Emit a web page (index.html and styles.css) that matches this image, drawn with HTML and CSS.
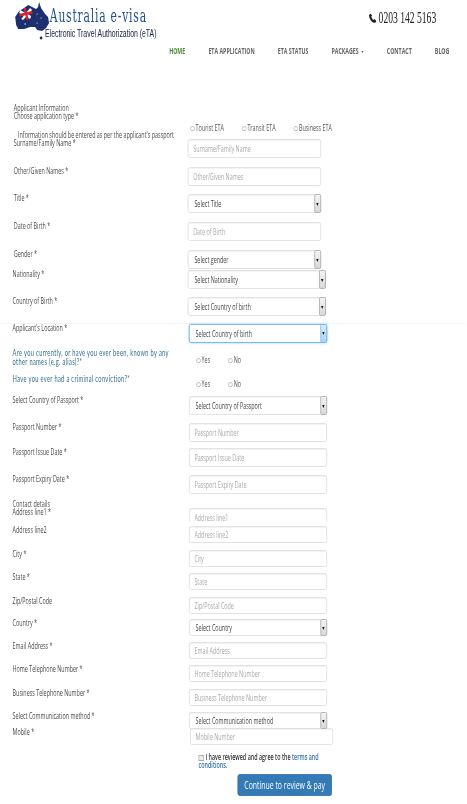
FILE: index.html
```html
<!DOCTYPE html>
<html lang="en">
<head>
<meta charset="utf-8">
<title>Australia e-visa</title>
<link rel="stylesheet" href="styles.css">
</head>
<body>
<div class="frame">
<div class="page">
  <header class="top">
    <a class="brand" href="#">
      <svg class="map" viewBox="0 0 50 42" preserveAspectRatio="none" aria-hidden="true">
        <path fill="#1d2f6f" d="M5 17 9 11 14 8 18 5 22 7 26 9 28 7 29 2 31 8 35 14 38 17 39 23 36 28 32 31 27 30 25 27 20 27 14 29 8 29 6 25Z"/>
        <circle cx="31" cy="38" r="1.4" fill="#1d2f6f"/>
        <path fill="#fff" d="M10 10 21 16 20 19 9 13ZM11 19 20 8 22 10 13 20Z"/>
        <path fill="#d8232f" d="M9 14 22 11 22.6 13.4 9.6 16.6ZM13.5 8 15.5 7.4 18.6 19.6 16.4 20.2Z"/>
        <g fill="#fff"><circle cx="27" cy="14" r=".6"/><circle cx="31" cy="18" r=".6"/><circle cx="27" cy="23" r=".6"/><circle cx="15" cy="24" r=".7"/></g>
      </svg>
      <span class="brand-text">
        <span class="brand-name">Australia e-visa</span>
        <span class="brand-sub">Electronic Travel Authorization (eTA)</span>
      </span>
    </a>
    <div class="phone">
      <svg class="phone-icon" viewBox="0 0 24 24" preserveAspectRatio="none" aria-hidden="true"><path d="M6.6 1.5 3 3.6C1.5 5 1.6 8 3.6 12.500s6 8.700 10.400 10.500c2.500.9 5.500.7 7-.9l2-3-5.500-4.500-3 2c-2.500-1-5.500-5-6.300-8.300l2.600-2.300Z"/></svg>
      <span>0203 142 5163</span>
    </div>
  </header>
  <nav class="nav">
    <a class="nav-link nav-link--active" href="#">Home</a>
    <a class="nav-link" href="#">ETA Application</a>
    <a class="nav-link" href="#">ETA Status</a>
    <a class="nav-link" href="#">Packages <span class="caret"></span></a>
    <a class="nav-link" href="#">Contact</a>
    <a class="nav-link" href="#">Blog</a>
  </nav>

  <form class="form">
    <div class="row row-intro">
      <div class="label">
        Applicant Information<br>Choose application type *
      </div>
      <div class="radios radios--type">
        <label class="radio"><input type="radio" name="type">Tourist ETA</label>
        <label class="radio"><input type="radio" name="type">Transit ETA</label>
        <label class="radio"><input type="radio" name="type">Business ETA</label>
      </div>
    </div>
    <p class="note">Information should be entered as per the applicant's passport</p>
    <div class="row h28">
      <div class="label">Surname/Family Name *</div>
      <input class="field" placeholder="Surname/Family Name">
    </div>
    <div class="row h27">
      <div class="label">Other/Given Names *</div>
      <input class="field" placeholder="Other/Given Names">
    </div>
    <div class="row h28">
      <div class="label">Title *</div>
      <div class="select"><select><option>Select Title</option></select><span class="arrow"></span></div>
    </div>
    <div class="row h28">
      <div class="label">Date of Birth *</div>
      <input class="field" placeholder="Date of Birth">
    </div>
    <div class="row h20">
      <div class="label">Gender *</div>
      <div class="select"><select><option>Select gender</option></select><span class="arrow"></span></div>
    </div>
    <div class="row row-b h27">
      <div class="label">Nationality *</div>
      <div class="select select--wide"><select><option>Select Nationality</option></select><span class="arrow"></span></div>
    </div>
    <div class="row row-b row-ruled">
      <div class="label">Country of Birth *</div>
      <div class="select select--wide"><select><option>Select Country of birth</option></select><span class="arrow"></span></div>
    </div>
    <div class="row row-b row-c row-location">
      <div class="label">Applicant's Location *</div>
      <div class="select select--wide select--focus"><select><option>Select Country of birth</option></select><span class="arrow"></span></div>
    </div>
    <div class="row row-b row-c row-q1">
      <div class="question">Are you currently, or have you ever been, known by any other names (e.g. alias)?*</div>
      <div class="radios radios--yes">
        <label class="radio"><input type="radio" name="alias">Yes</label>
        <label class="radio"><input type="radio" name="alias">No</label>
      </div>
    </div>
    <div class="row row-b row-c h22">
      <div class="question">Have you ever had a criminal conviction?*</div>
      <div class="radios radios--yes radios--low">
        <label class="radio"><input type="radio" name="crime">Yes</label>
        <label class="radio"><input type="radio" name="crime">No</label>
      </div>
    </div>
    <div class="row row-b row-c h27">
      <div class="label">Select Country of Passport *</div>
      <div class="select select--wide"><select><option>Select Country of Passport</option></select><span class="arrow"></span></div>
    </div>
    <div class="row row-b row-c h25">
      <div class="label">Passport Number *</div>
      <input class="field field--wide" placeholder="Passport Number">
    </div>
    <div class="row row-b row-c h27">
      <div class="label">Passport Issue Date *</div>
      <input class="field field--wide" placeholder="Passport Issue Date">
    </div>
    <div class="row row-b row-c h25">
      <div class="label">Passport Expiry Date *</div>
      <input class="field field--wide" placeholder="Passport Expiry Date">
    </div>
    <div class="row row-b row-c row-contact">
      <div class="label">Contact details<br>Address line1 *</div>
      <div class="clip"><input class="field field--wide" placeholder="Address line1"></div>
    </div>
    <div class="row row-b row-c h24">
      <div class="label">Address line2</div>
      <input class="field field--wide field--short" placeholder="Address line2">
    </div>
    <div class="row row-b row-c h23">
      <div class="label">City *</div>
      <input class="field field--wide field--short" placeholder="City">
    </div>
    <div class="row row-b row-c h24">
      <div class="label">State *</div>
      <input class="field field--wide field--short" placeholder="State">
    </div>
    <div class="row row-b row-c h22">
      <div class="label">Zip/Postal Code</div>
      <input class="field field--wide field--short" placeholder="Zip/Postal Code">
    </div>
    <div class="row row-b row-c h23">
      <div class="label">Country *</div>
      <div class="select select--wide select--short"><select><option>Select Country</option></select><span class="arrow"></span></div>
    </div>
    <div class="row row-b row-c h23">
      <div class="label">Email Address *</div>
      <input class="field field--wide field--short" placeholder="Email Address">
    </div>
    <div class="row row-b row-c h24">
      <div class="label">Home Telephone Number *</div>
      <input class="field field--wide field--short" placeholder="Home Telephone Number">
    </div>
    <div class="row row-b row-c h23">
      <div class="label">Business Telephone Number *</div>
      <input class="field field--wide field--short" placeholder="Business Telephone Number">
    </div>
    <div class="row row-b row-c h16">
      <div class="label">Select Communication method *</div>
      <div class="select select--wide select--short"><select><option>Select Communication method</option></select><span class="arrow"></span></div>
    </div>
    <div class="row row-b row-c row-mobile">
      <div class="label">Mobile *</div>
      <input class="field field--mobile" placeholder="Mobile Number">
    </div>
    <div class="agree">
      <label class="agree-text"><input type="checkbox"> I have reviewed and agree to the <a href="#">terms and conditions.</a></label>
    </div>
    <div class="actions"><button class="submit" type="button">Continue to review &amp; pay</button></div>
  </form>
</div>
</div>
</body>
</html>
```
FILE: styles.css
```css
html, body { margin: 0; padding: 0; background: #fff; }
.frame {
  width: 467px;
  height: 804px;
  overflow: hidden;
  filter: blur(.3px);
}
.page {
  width: 776px;
  height: 804px;
  transform: scaleX(.6);
  transform-origin: 0 0;
  font-family: "Open Sans", "Liberation Sans", sans-serif;
  font-size: 9px;
  color: #444;
}
a { text-decoration: none; }

/* header */
.top { display: flex; justify-content: space-between; height: 42px; }
.brand { display: flex; margin-left: 17px; color: inherit; }
.map { width: 83px; height: 42px; flex: none; }
.brand-text { display: flex; flex-direction: column; margin-left: -17px; }
.brand-name {
  margin: 6px 0 0 0;
  font: 18px/19px "DejaVu Serif", serif;
  letter-spacing: 1.300px;
  color: #1f4f86;
  white-space: nowrap;
}
.brand-sub {
  margin: 1px 0 0 -8px;
  font: 11.500px/14px "Liberation Sans", sans-serif;
  color: #12233f;
  white-space: nowrap;
}
.phone {
  display: flex;
  align-items: center;
  gap: 3px;
  height: 36px;
  margin-right: 49px;
  font: 16px/1 "Liberation Serif", serif;
  color: #222;
}
.phone-icon { width: 14px; height: 10px; fill: #222; }
.nav {
  display: flex;
  justify-content: flex-end;
  gap: 38.500px;
  height: 18px;
  margin-right: 27px;
}
.nav-link {
  font: 700 8.800px/18px "Open Sans", sans-serif;
  text-transform: uppercase;
  color: #666;
  white-space: nowrap;
}
.nav-link--active { color: #55883b; }
.caret {
  display: inline-block;
  vertical-align: middle;
  border: 2px solid transparent;
  border-top-color: #666;
  border-bottom: 0;
  margin-left: 2px;
}

/* form */
.form { padding-top: 44px; }
.row {
  display: grid;
  grid-template-columns: 290px 1fr;
  align-items: start;
  padding-left: 23px;
  height: 27px;
}
.row-b { padding-left: 21px; grid-template-columns: 292px 1fr; }
.row-c { grid-template-columns: 294px 1fr; }
.h16 { height: 16px; }
.h20 { height: 20px; }
.h22 { height: 22px; }
.h23 { height: 23px; }
.h24 { height: 24px; }
.h25 { height: 25px; }
.h27 { height: 27px; }
.h28 { height: 28px; }
.row-intro { height: 27px; }
.row-ruled { height: 26.500px; box-sizing: border-box; border-bottom: 1px solid #f4f4f4; padding-bottom: 5px; }
.row-location { height: 24.500px; }
.row-q1 { height: 26px; }
.row-contact { height: 26px; }
.row-mobile { height: 25px; grid-template-columns: 296px 1fr; }

.label { line-height: 8px; white-space: nowrap; color: #4a4a4a; }
.note { height: 8px; margin: 0 0 0 30px; line-height: 8px; white-space: nowrap; color: #4a4a4a; }
.question {
  width: 270px;
  padding-top: 1px;
  font: 9.500px/8.500px "Lato", sans-serif;
  letter-spacing: .55px;
  color: #2f6f8f;
}
.field, .select select {
  box-sizing: border-box;
  display: block;
  width: 222px;
  height: 19px;
  margin: 0;
  padding: 0 8px;
  border: 1px solid #dcdcdc;
  border-radius: 3px;
  background: #fff;
  box-shadow: inset 0 1px 1px rgba(0,0,0,.05);
  font: 9px "Open Sans", sans-serif;
  color: #555;
  outline: none;
}
.field::placeholder { color: #aaa; opacity: 1; }
.field--wide { width: 230px; }
.field--short { height: 17px; }
.field--mobile { width: 238px; height: 17px; }
.clip { height: 14px; margin-top: 8px; overflow: hidden; }
.select { position: relative; width: 222px; }
.select select { width: 100%; padding-left: 10px; appearance: none; color: #444; }
.select--wide { width: 230px; }
.select--short select { height: 17px; }
.select--focus select {
  border-color: #66afe9;
  box-shadow: 0 0 4px rgba(102,175,233,.6);
}
.arrow {
  position: absolute;
  top: 0;
  right: 0;
  bottom: 0;
  width: 11px;
  box-sizing: border-box;
  border: 1px solid #aaa;
  border-radius: 2px;
  background: linear-gradient(#f4f4f4, #d8d8d8);
  pointer-events: none;
}
.arrow::after {
  content: "";
  position: absolute;
  left: 2px;
  top: 50%;
  margin-top: -1px;
  border: 2.500px solid transparent;
  border-top: 3px solid #111;
  border-bottom: 0;
}
.select--focus .arrow { border-color: #7ab8e8; background: linear-gradient(#d9ebf9, #a9d2f2); }

.radios { display: flex; color: #555; }
.radio { display: flex; align-items: center; white-space: nowrap; line-height: 10px; }
.radio input {
  appearance: none;
  flex: none;
  width: 8px;
  height: 5px;
  margin: 0 1px 0 0;
  border: 1px solid #bbb;
  border-radius: 50%;
  background: #fff;
}
.radios--type { gap: 30px; padding: 19px 0 0 4px; }
.radios--yes { gap: 30px; padding: 7px 0 0 12px; }
.radios--low { padding-top: 5px; }

.agree { margin: 0 0 0 331px; width: 210px; font-weight: 600; line-height: 7.500px; color: #333; }
.agree-text { display: block; }
.agree input {
  appearance: none;
  display: inline-block;
  vertical-align: -1px;
  width: 9px;
  height: 6px;
  margin: 0;
  border: 1px solid #aaa;
  background: #eee;
}
.agree a { color: #2f73a8; }
.actions { display: flex; justify-content: flex-end; padding: 5px 223px 0 0; }
.submit {
  width: 157px;
  height: 22px;
  padding: 0;
  border: 1px solid #2e6da4;
  border-radius: 3px;
  background: #337ab7;
  color: #fff;
  font: 11.500px "Open Sans", sans-serif;
}
```
